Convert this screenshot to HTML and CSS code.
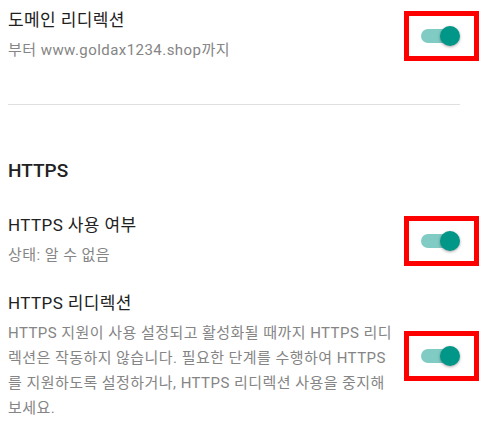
FILE: index.html
```html
<!DOCTYPE html>
<html lang="ko">
<head>
  <meta charset="UTF-8">
  <meta name="viewport" content="width=device-width, initial-scale=1.0">
  <title>도메인 설정</title>
  <link rel="stylesheet" href="styles.css">
</head>
<body>
  <div class="settings">
    <div class="row">
      <div class="text">
        <div class="title">도메인 리디렉션</div>
        <div class="desc">부터 www.goldax1234.shop까지</div>
      </div>
      <div class="toggle marked"><span class="track"></span><span class="thumb"></span></div>
    </div>

    <hr class="divider">

    <h2 class="heading">HTTPS</h2>

    <div class="row">
      <div class="text">
        <div class="title">HTTPS 사용 여부</div>
        <div class="desc">상태: 알 수 없음</div>
      </div>
      <div class="toggle marked"><span class="track"></span><span class="thumb"></span></div>
    </div>

    <div class="row row-last">
      <div class="text">
        <div class="title">HTTPS 리디렉션</div>
        <div class="desc">HTTPS 지원이 사용 설정되고 활성화될 때까지 HTTPS 리디렉션은 작동하지 않습니다. 필요한 단계를 수행하여 HTTPS를 지원하도록 설정하거나, HTTPS 리디렉션 사용을 중지해 보세요.</div>
      </div>
      <div class="toggle marked"><span class="track"></span><span class="thumb"></span></div>
    </div>
  </div>
</body>
</html>
```

FILE: styles.css
```css
body {
  margin: 0;
  padding: 8px 25px 0 8px;
  background: #fff;
  font-family: Roboto, "Noto Sans CJK KR", sans-serif;
  color: #212121;
}
.settings {
  width: 453px;
}
.row {
  display: flex;
  justify-content: space-between;
  align-items: center;
}
.row-last {
  margin-top: 23px;
}
.text {
  width: 386px;
}
.title {
  font-size: 17px;
  line-height: 24px;
  letter-spacing: 0.4px;
  color: #212121;
}
.desc {
  margin-top: 6px;
  font-size: 15px;
  line-height: 25px;
  letter-spacing: 0.45px;
  color: #858585;
}
.divider {
  margin: 41px 1px 0 0;
  border: none;
  border-top: 1px solid #e0e0e0;
}
.heading {
  margin: 54px 0 30px;
  font-size: 19px;
  font-weight: 500;
  line-height: 24px;
  color: #212121;
}
.toggle {
  position: relative;
  width: 40px;
  height: 20px;
  flex-shrink: 0;
}
.track {
  position: absolute;
  left: 0;
  top: 3px;
  width: 36px;
  height: 14px;
  border-radius: 7px;
  background: #80cbc4;
}
.thumb {
  position: absolute;
  right: 1px;
  top: 0;
  width: 20px;
  height: 20px;
  border-radius: 50%;
  background: #009688;
  box-shadow: 0 1px 3px rgba(0, 0, 0, 0.35);
}
.marked::after {
  content: "";
  position: absolute;
  top: -15px;
  bottom: -15px;
  left: -17px;
  right: -18px;
  border: 5px solid #ff0000;
}
```
